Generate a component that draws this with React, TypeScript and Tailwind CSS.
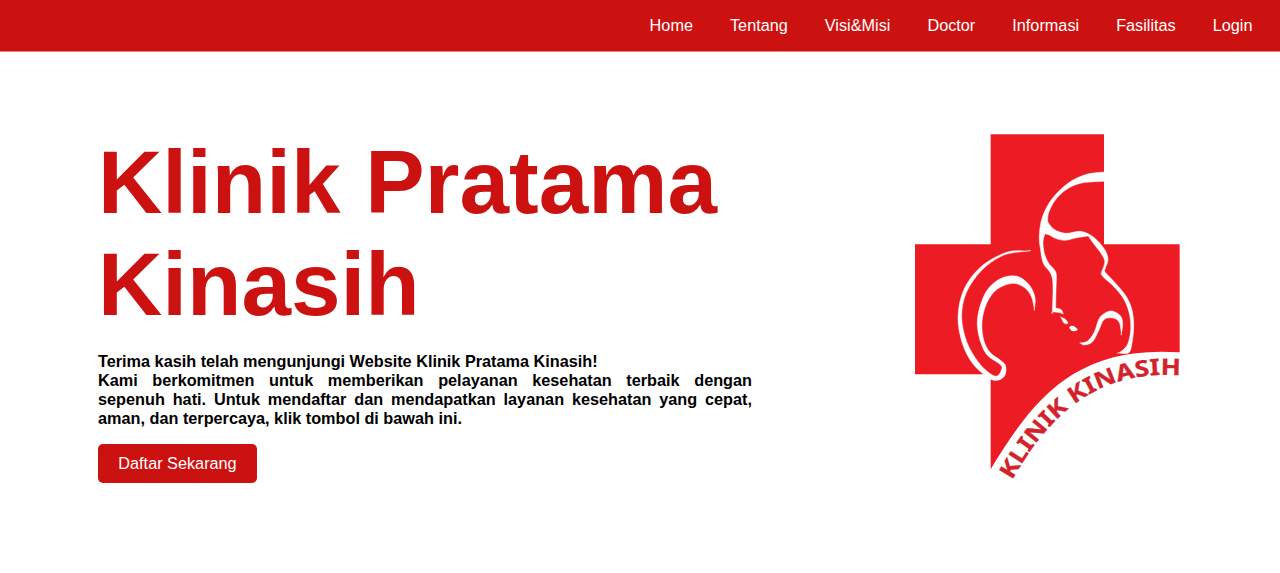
import React from "react";

type Point = [number, number];

// Smooth closed outline through the points; a repeated point makes a corner.
function outline(pts: Point[]): string {
  const n = pts.length;
  const at = (i: number) => pts[(i + n) % n];
  let d = `M${pts[0][0]} ${pts[0][1]}`;
  for (let i = 0; i < n; i++) {
    const [p0, p1, p2, p3] = [at(i - 1), at(i), at(i + 1), at(i + 2)];
    d += `C${p1[0] + (p2[0] - p0[0]) / 6} ${p1[1] + (p2[1] - p0[1]) / 6} ${p2[0] - (p3[0] - p1[0]) / 6} ${p2[1] - (p3[1] - p1[1]) / 6} ${p2[0]} ${p2[1]}`;
  }
  return d + "Z";
}

const mother: Point[] = [
  [613, 156], [613, 156], [560, 163], [505, 189], [455, 238], [427, 292], [418, 345], [421, 385], [430, 430],
  [448, 454], [457, 475], [459, 510], [457, 576], [457, 576], [474, 577], [489, 581], [489, 581], [484, 569], [467, 564], [467, 564],
  [468, 510], [469, 465], [462, 448], [445, 428], [433, 400], [429, 365], [435, 341], [435, 341], [448, 345], [466, 355],
  [495, 361], [530, 353], [565, 348], [565, 348], [580, 370], [603, 400], [614, 422], [611, 440], [604, 458], [609, 470],
  [642, 500], [673, 540], [689, 585], [692, 630], [684, 670], [670, 689], [655, 699], [655, 699], [685, 699], [695, 675],
  [701, 620], [696, 570], [678, 528], [645, 488], [616, 457], [616, 445], [624, 420], [617, 394], [597, 367], [571, 345],
  [540, 334], [497, 340], [462, 328], [443, 305], [443, 305], [446, 278], [466, 240], [500, 208], [545, 189], [613, 184], [613, 184],
];

const baby: Point[] = [
  [383, 393], [383, 393], [320, 397], [243, 440], [192, 508], [174, 590], [187, 670], [219, 732], [265, 773],
  [292, 781], [314, 767], [317, 738], [303, 722], [270, 697], [251, 660], [246, 605], [260, 550], [291, 508], [340, 490],
  [376, 505], [395, 532], [403, 567], [403, 567], [405, 533], [388, 495], [351, 469], [303, 475], [259, 514], [234, 585],
  [236, 645], [259, 702], [300, 733], [305, 748], [292, 768], [269, 760], [234, 725], [200, 665], [185, 592], [198, 520],
  [244, 452], [310, 406],
];

const hand: Point[] = [
  [541, 669], [541, 669], [563, 663], [583, 636], [600, 592], [632, 573], [661, 587], [668, 612], [664, 642], [664, 642],
  [659, 610], [643, 595], [613, 598], [596, 632], [577, 666], [552, 675],
];

const lipUpper: Point[] = [[483, 592], [483, 592], [496, 598], [504, 610], [492, 609]];
const lipLower: Point[] = [[509, 621], [521, 619], [532, 630], [516, 632]];

const links = ["Home", "Tentang", "Visi&Misi", "Doctor", "Informasi", "Fasilitas", "Login"];

function Logo() {
  return (
    <svg viewBox="0 0 900 1110" className="h-[370px] w-[300px]" role="img" aria-label="Klinik Kinasih">
      <path
        fill="#ed1c24"
        d="M272 43H612V373H839V697C524 675 398 840 272 1048V763H45V373H272Z"
      />
      <g fill="#fff" stroke="#fff" strokeWidth="1.5">
        <path d={outline(mother)} />
        <path d={outline(baby)} />
        <path d={outline(hand)} />
        <path d={outline(lipUpper)} />
        <path d={outline(lipLower)} />
      </g>
      <path id="motto" fill="none" d="M336 1081C429 917 570 741 855 767" />
      <text
        fill="#d2232a"
        stroke="#d2232a"
        strokeWidth="0.8"
        fontSize="68"
        fontWeight="700"
        className="font-['Noto_Sans',sans-serif]"
      >
        <textPath href="#motto" textLength="635" lengthAdjust="spacingAndGlyphs">
          KLINIK KINASIH
        </textPath>
      </text>
    </svg>
  );
}

export default function App() {
  return (
    <div className="h-[573px] overflow-hidden bg-white font-['Liberation_Sans',Arial,sans-serif] text-[16.25px]">
      <nav className="flex h-[52px] items-center justify-end gap-[37px] border-b border-[#e88080] bg-[#cc1111] pr-[27.5px] text-white">
        {links.map((label) => (
          <a key={label} href="#">
            {label}
          </a>
        ))}
      </nav>
      <main className="flex justify-between pr-20 pl-[98px]">
        <section className="w-[654px] pt-[79px]">
          <h1 className="text-[89.1px] leading-[102px] font-bold text-[#cc1111]">Klinik Pratama Kinasih</h1>
          <p className="mt-[17px] text-justify leading-[19px] font-bold text-black">
            Terima kasih telah mengunjungi Website Klinik Pratama Kinasih!
            <br />
            Kami berkomitmen untuk memberikan pelayanan kesehatan terbaik dengan sepenuh hati. Untuk mendaftar dan
            mendapatkan layanan kesehatan yang cepat, aman, dan terpercaya, klik tombol di bawah ini.
          </p>
          <button className="mt-4 flex h-[39px] w-[159px] items-center justify-center rounded-[5px] bg-[#cc1111] text-white">
            Daftar Sekarang
          </button>
        </section>
        <div className="pt-[68px]">
          <Logo />
        </div>
      </main>
    </div>
  );
}
